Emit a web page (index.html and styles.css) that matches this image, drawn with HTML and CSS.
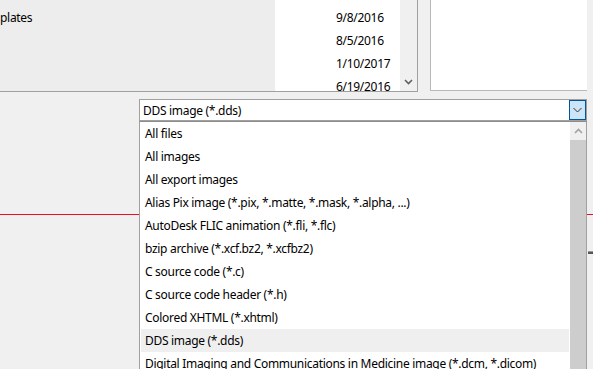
FILE: index.html
```html
<!DOCTYPE html>
<html lang="en">
<head>
  <meta charset="UTF-8">
  <title>Open Image</title>
  <link rel="stylesheet" href="styles.css">
</head>
<body>
  <div class="browser">
    <div class="files">
      <div class="names">
        <div class="row">plates</div>
      </div>
      <div class="dates">
        <div class="row">9/8/2016</div>
        <div class="row">8/5/2016</div>
        <div class="row">1/10/2017</div>
        <div class="row">6/19/2016</div>
      </div>
      <div class="vscroll">
        <svg width="9" height="6" viewBox="0 0 9 6"><path d="M1 1 L4.5 4.5 L8 1" fill="none" stroke="#606060" stroke-width="1.6"/></svg>
      </div>
    </div>
    <div class="preview"></div>
  </div>

  <div class="filter">
    <div class="combo">
      <span class="combo-text">DDS image (*.dds)</span>
      <span class="combo-btn">
        <svg width="9" height="6" viewBox="0 0 9 6"><path d="M0.5 1 L4.5 5 L8.5 1" fill="none" stroke="#333" stroke-width="1"/></svg>
      </span>
    </div>
  </div>

  <div class="divider"></div>
  <div class="mark-row"><span class="mark"></span></div>

  <div class="dropdown">
    <div class="options">
      <div class="option">All files</div>
      <div class="option">All images</div>
      <div class="option">All export images</div>
      <div class="option">Alias Pix image (*.pix, *.matte, *.mask, *.alpha, ...)</div>
      <div class="option">AutoDesk FLIC animation (*.fli, *.flc)</div>
      <div class="option">bzip archive (*.xcf.bz2, *.xcfbz2)</div>
      <div class="option">C source code (*.c)</div>
      <div class="option">C source code header (*.h)</div>
      <div class="option">Colored XHTML (*.xhtml)</div>
      <div class="option selected">DDS image (*.dds)</div>
      <div class="option">Digital Imaging and Communications in Medicine image (*.dcm, *.dicom)</div>
    </div>
    <div class="dscroll">
      <div class="dscroll-up">
        <svg width="9" height="6" viewBox="0 0 9 6"><path d="M1 5 L4.5 1.5 L8 5" fill="none" stroke="#a3a3a3" stroke-width="1.6"/></svg>
      </div>
      <div class="dscroll-thumb"></div>
    </div>
  </div>
</body>
</html>
```

FILE: styles.css
```css
body{
  margin: 0;
  width: 593px;
  height: 369px;
  overflow: hidden;
  background-color: #f0f0f0;
  font-family: "Noto Sans", "Open Sans", sans-serif;
  font-size: 12px;
  letter-spacing: -0.3px;
  color: #000;
  position: relative;
}

/* file list + preview */
.browser{
  display: flex;
  height: 92px;
}

.files{
  display: flex;
  width: 417px;
  height: 91px;
  border-right: 1px solid #a0a0a0;
  border-bottom: 1px solid #a0a0a0;
}

.names{
  width: 275px;
  background-color: #ededed;
  padding-top: 6px;
}

.dates{
  width: 64px;
  background-color: #fff;
  padding-top: 6px;
  padding-left: 61px;
}

.row{
  height: 23px;
  line-height: 23px;
  white-space: nowrap;
}

.vscroll{
  width: 17px;
  background-color: #f0f0f0;
  display: flex;
  align-items: flex-end;
  justify-content: center;
  padding-bottom: 6px;
  box-sizing: border-box;
}

.preview{
  margin-left: 12px;
  width: 156px;
  height: 90px;
  background-color: #fff;
  border-left: 1px solid #b9b9b9;
  border-bottom: 1px solid #b9b9b9;
}

/* file type combo */
.filter{
  height: 29px;
  padding-left: 139px;
  padding-top: 7px;
  box-sizing: border-box;
}

.combo{
  display: flex;
  align-items: center;
  width: 448px;
  height: 22px;
  box-sizing: border-box;
  background-color: #fff;
  border: 1px solid #a0a0a0;
}

.combo-text{
  flex: 1;
  padding-left: 3px;
}

.combo-btn{
  width: 17px;
  height: 20px;
  box-sizing: border-box;
  background-color: #cce4f7;
  border: 1px solid #005499;
  display: flex;
  align-items: center;
  justify-content: center;
}

.divider{
  margin-top: 93px;
  height: 1px;
  background-color: #e81123;
}

.mark-row{
  display: flex;
  justify-content: flex-end;
  margin-top: 36px;
}

.mark{
  width: 5px;
  height: 2px;
  background-color: #555;
  border-top: 1px solid #999;
}

/* open list */
.dropdown{
  position: absolute;
  top: 121px;
  left: 139px;
  width: 448px;
  height: 260px;
  box-sizing: border-box;
  display: flex;
  background-color: #fff;
  border: 1px solid #a0a0a0;
  border-top-color: #8c8c8c;
}

.options{
  width: 430px;
  padding: 0 1px;
  box-sizing: border-box;
}

.option{
  height: 23px;
  line-height: 23px;
  padding-left: 4px;
  white-space: nowrap;
}

.option.selected{
  background-color: #efefef;
}

.dscroll{
  width: 16px;
  display: flex;
  flex-direction: column;
  background-color: #f0f0f0;
}

.dscroll-up{
  height: 18px;
  display: flex;
  align-items: center;
  justify-content: center;
}

.dscroll-thumb{
  flex: 1;
  background-color: #cdcdcd;
}
```
